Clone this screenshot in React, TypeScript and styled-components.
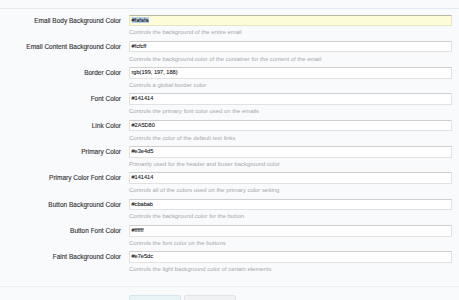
import React from "react";
import styled, { createGlobalStyle } from "styled-components";

const Global = createGlobalStyle`
  html, body { margin: 0; padding: 0; background: #f9fafc; }
  body { font-family: "Liberation Sans", Arial, sans-serif; overflow: hidden; }
`;

const Page = styled.div`
  width: 459px;
  height: 300px;
  overflow: hidden;
  padding-top: 8px;
  box-sizing: border-box;
`;

const Form = styled.div`
  border-top: 1px solid #e4ebf1;
  padding-top: 5.5px;
  display: flex;
  flex-direction: column;
`;

const Row = styled.div`
  display: grid;
  grid-template-columns: 121px 323px;
  column-gap: 8px;
  height: 26.33px;
`;

const Label = styled.div`
  text-align: right;
  font-size: 6.5px;
  color: #333;
  line-height: 11.5px;
  white-space: nowrap;
  -webkit-text-stroke: 0.12px #333;
`;

const Field = styled.div`
  display: flex;
  flex-direction: column;
`;

const Input = styled.div<{ $focus?: boolean }>`
  height: 11.5px;
  box-sizing: border-box;
  border: 1px solid ${(p) => (p.$focus ? "#e6e4c4" : "#e2e2e2")};
  border-top-color: ${(p) => (p.$focus ? "#b9b8a6" : "#cfcfcf")};
  background: ${(p) => (p.$focus ? "#fdfcd9" : "#ffffff")};
  border-radius: 1px;
  font-size: 5.6px;
  color: #1e1e1e;
  line-height: 9.5px;
  padding-left: 1.5px;
  white-space: nowrap;
  -webkit-text-stroke: 0.1px #1e1e1e;
`;

const Sel = styled.span`
  background: #b8d0ea;
`;

const Desc = styled.div`
  font-size: 5.9px;
  color: #a8a8a8;
  margin-top: 3.2px;
  white-space: nowrap;
`;

const Footer = styled.div`
  margin-top: 8.5px;
  border-top: 1px solid #eceef2;
  padding-top: 8px;
  padding-left: 129px;
  display: flex;
  gap: 3px;
`;

const Button = styled.div<{ $primary?: boolean }>`
  width: 52px;
  height: 14px;
  border-radius: 2px 2px 0 0;
  border: 1px solid ${(p) => (p.$primary ? "#d6e6ec" : "#e2e3e6")};
  background: ${(p) => (p.$primary ? "#e8f3f6" : "#f0f1f3")};
  box-sizing: border-box;
`;

const rows: { label: string; value: string; desc: string; focus?: boolean }[] = [
  { label: "Email Body Background Color", value: "#fafafa", desc: "Controls the background of the entire email", focus: true },
  { label: "Email Content Background Color", value: "#fcfcff", desc: "Controls the background color of the container for the content of the email" },
  { label: "Border Color", value: "rgb(199, 197, 188)", desc: "Controls a global border color" },
  { label: "Font Color", value: "#141414", desc: "Controls the primary font color used on the emails" },
  { label: "Link Color", value: "#2A5D80", desc: "Controls the color of the default text links" },
  { label: "Primary Color", value: "#e3e4d5", desc: "Primarily used for the header and footer background color" },
  { label: "Primary Color Font Color", value: "#141414", desc: "Controls all of the colors used on the primary color setting" },
  { label: "Button Background Color", value: "#cbabab", desc: "Controls the background color for the button" },
  { label: "Button Font Color", value: "#ffffff", desc: "Controls the font color on the buttons" },
  { label: "Faint Background Color", value: "#e7e5dc", desc: "Controls the light background color of certain elements" },
];

export default function App() {
  return (
    <>
      <Global />
      <Page>
        <Form>
          {rows.map((r) => (
            <Row key={r.label}>
              <Label>{r.label}</Label>
              <Field>
                <Input $focus={r.focus}>{r.focus ? <Sel>{r.value}</Sel> : r.value}</Input>
                <Desc>{r.desc}</Desc>
              </Field>
            </Row>
          ))}
        </Form>
        <Footer>
          <Button $primary />
          <Button />
        </Footer>
      </Page>
    </>
  );
}
